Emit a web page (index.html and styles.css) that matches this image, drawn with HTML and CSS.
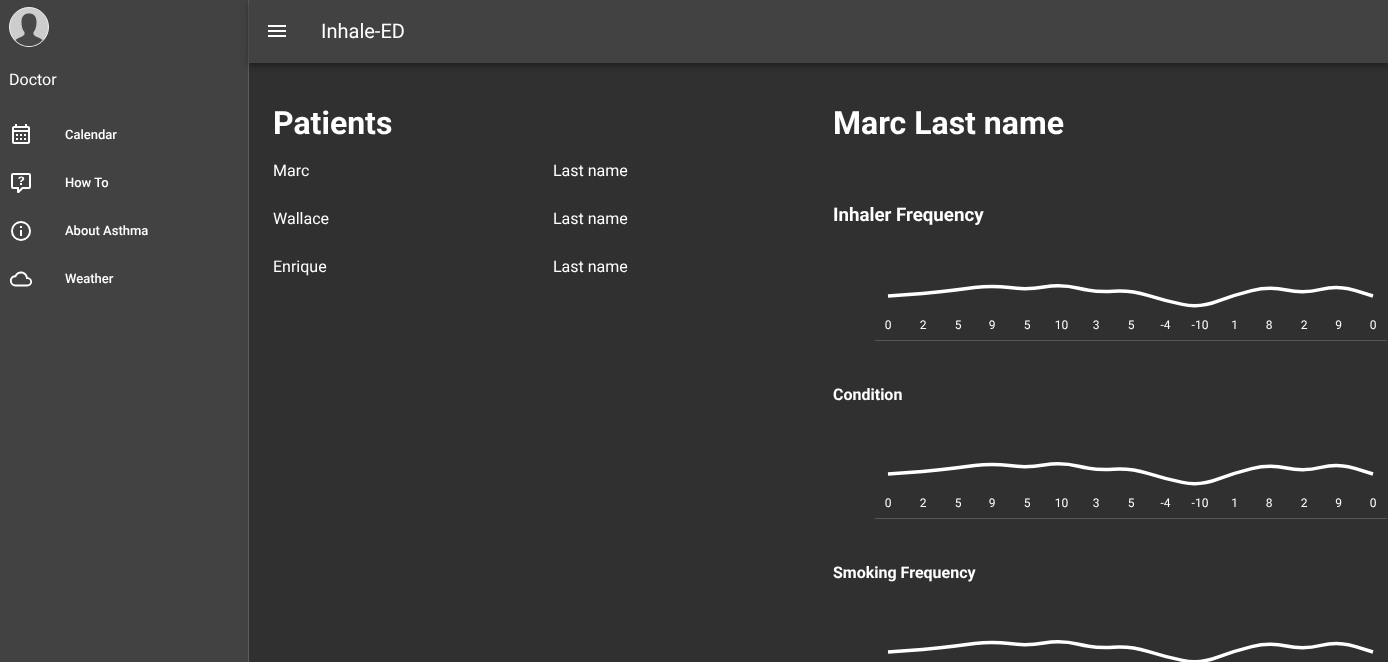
FILE: index.html
```html
<!DOCTYPE html>
<html>
<head>
    <title>Inhale-ED</title>
    <link rel="stylesheet" href="styles.css">
</head>
<body>
    <aside class="sidebar">
        <div class="avatar">
            <svg width="40" height="40" viewBox="0 0 40 40">
                <circle cx="20" cy="20" r="19.500" fill="#cdcdcd" stroke="#eeeeee" stroke-width="1"/>
                <path d="M6.500 33 C9 30.500 14 30 15.500 27.500 L15.500 25 C13.500 23 12.300 19 12.500 14 C12.800 9 15.500 6.500 20 6.500 C24.500 6.500 27.200 9 27.500 14 C27.700 19 26.500 23 24.500 25 L24.500 27.500 C26 30 31 30.500 33.500 33 C30 37.200 25 39 20 39 C15 39 10 37.200 6.500 33 Z" fill="#484848"/>
            </svg>
        </div>
        <div class="role">Doctor</div>
        <nav class="nav">
            <a class="nav-item">
                <svg class="nav-icon" width="24" height="24" viewBox="0 0 24 24"><path fill="#fff" d="M7 11H9V13H7V11M21 5V19C21 20.110 20.110 21 19 21H5C3.890 21 3 20.100 3 19V5C3 3.900 3.900 3 5 3H6V1H8V3H16V1H18V3H19C20.110 3 21 3.900 21 5M5 7H19V5H5V7M19 19V9H5V19H19M15 13V11H17V13H15M11 13V11H13V13H11M7 15H9V17H7V15M15 17V15H17V17H15M11 17V15H13V17H11Z"/></svg>
                <span>Calendar</span>
            </a>
            <a class="nav-item">
                <svg class="nav-icon" width="24" height="24" viewBox="0 0 24 24"><path fill="#fff" d="M4 2A2 2 0 0 0 2 4V16A2 2 0 0 0 4 18H8V21A1 1 0 0 0 9 22H9.500C9.750 22 10 21.900 10.200 21.710L13.900 18H20A2 2 0 0 0 22 16V4C22 2.890 21.100 2 20 2H4M4 4H20V16H13.080L10 19.080V16H4V4M12.190 5.500C11.300 5.500 10.590 5.680 10.050 6.040C9.500 6.400 9.220 7 9.270 7.690H11.240C11.240 7.410 11.340 7.200 11.500 7.060C11.700 6.920 11.920 6.850 12.190 6.850C12.500 6.850 12.770 6.930 12.950 7.110C13.130 7.280 13.220 7.500 13.220 7.800C13.220 8.080 13.140 8.330 13 8.540C12.830 8.760 12.620 8.940 12.360 9.080C11.840 9.400 11.500 9.680 11.290 9.920C11.100 10.160 11 10.500 11 11H13C13 10.720 13.050 10.500 13.140 10.320C13.230 10.150 13.400 10 13.660 9.850C14.120 9.640 14.500 9.360 14.790 9C15.080 8.630 15.230 8.240 15.230 7.800C15.230 7.100 14.950 6.540 14.400 6.120C13.850 5.710 13.110 5.500 12.190 5.500M11 12V14H13V12H11Z"/></svg>
                <span>How To</span>
            </a>
            <a class="nav-item">
                <svg class="nav-icon" width="24" height="24" viewBox="0 0 24 24"><path fill="#fff" d="M11 9H13V7H11M12 20C7.590 20 4 16.410 4 12C4 7.590 7.590 4 12 4C16.410 4 20 7.590 20 12C20 16.410 16.410 20 12 20M12 2A10 10 0 0 0 2 12A10 10 0 0 0 12 22A10 10 0 0 0 22 12A10 10 0 0 0 12 2M11 17H13V11H11V17Z"/></svg>
                <span>About Asthma</span>
            </a>
            <a class="nav-item">
                <svg class="nav-icon" width="24" height="24" viewBox="-1 -1 26 26"><path fill="#fff" d="M19 18H6A4 4 0 0 1 2 14A4 4 0 0 1 6 10H6.710C7.370 7.690 9.500 6 12 6A5.500 5.500 0 0 1 17.500 11.500V12H19A3 3 0 0 1 22 15A3 3 0 0 1 19 18M19.350 10.030C18.670 6.590 15.640 4 12 4C9.110 4 6.600 5.630 5.350 8.030C2.340 8.360 0 10.900 0 14A6 6 0 0 0 6 20H19C21.760 20 24 17.760 24 15C24 12.360 21.950 10.220 19.350 10.030Z"/></svg>
                <span>Weather</span>
            </a>
        </nav>
    </aside>

    <div class="page">
        <header class="topbar">
            <svg class="menu-icon" width="24" height="24" viewBox="0 0 24 24"><path fill="#fff" d="M3 18h18v-2H3v2zm0-5h18v-2H3v2zm0-7v2h18V6H3z"/></svg>
            <div class="app-title">Inhale-ED</div>
        </header>

        <main class="content">
            <section class="patients">
                <h1>Patients</h1>
                <div class="patient-row"><span>Marc</span><span>Last name</span></div>
                <div class="patient-row"><span>Wallace</span><span>Last name</span></div>
                <div class="patient-row"><span>Enrique</span><span>Last name</span></div>
            </section>

            <section class="details">
                <h1>Marc Last name</h1>

                <h2 class="first-chart">Inhaler Frequency</h2>
                <div class="chart">
                    <svg width="512" height="61" viewBox="0 0 512 61">
                        <path class="spark" d="M13 17 L30.320 15.800 Q47.640 14.600 64.960 12.800 Q82.290 11 99.610 8.600 Q116.930 6.200 134.250 8.600 Q151.570 11 168.890 8 Q186.210 5 203.540 9.200 Q220.860 13.400 238.180 12.200 Q255.500 11 272.820 16.400 Q290.140 21.800 307.460 25.400 Q324.790 29 342.110 22.400 Q359.430 15.800 376.750 11.600 Q394.070 7.400 411.390 11 Q428.710 14.600 446.040 10.400 Q463.360 6.200 480.680 11.600 L498 17"/>
                        <text x="13" y="50">0</text><text x="48" y="50">2</text><text x="83" y="50">5</text><text x="117" y="50">9</text><text x="152" y="50">5</text><text x="186.500" y="50">10</text><text x="221" y="50">3</text><text x="256" y="50">5</text><text x="290.500" y="50">-4</text><text x="325" y="50">-10</text><text x="359.500" y="50">1</text><text x="394" y="50">8</text><text x="429" y="50">2</text><text x="463.500" y="50">9</text><text x="498" y="50">0</text>
                    </svg>
                </div>

                <h2>Condition</h2>
                <div class="chart">
                    <svg width="512" height="61" viewBox="0 0 512 61">
                        <path class="spark" d="M13 17 L30.320 15.800 Q47.640 14.600 64.960 12.800 Q82.290 11 99.610 8.600 Q116.930 6.200 134.250 8.600 Q151.570 11 168.890 8 Q186.210 5 203.540 9.200 Q220.860 13.400 238.180 12.200 Q255.500 11 272.820 16.400 Q290.140 21.800 307.460 25.400 Q324.790 29 342.110 22.400 Q359.430 15.800 376.750 11.600 Q394.070 7.400 411.390 11 Q428.710 14.600 446.040 10.400 Q463.360 6.200 480.680 11.600 L498 17"/>
                        <text x="13" y="50">0</text><text x="48" y="50">2</text><text x="83" y="50">5</text><text x="117" y="50">9</text><text x="152" y="50">5</text><text x="186.500" y="50">10</text><text x="221" y="50">3</text><text x="256" y="50">5</text><text x="290.500" y="50">-4</text><text x="325" y="50">-10</text><text x="359.500" y="50">1</text><text x="394" y="50">8</text><text x="429" y="50">2</text><text x="463.500" y="50">9</text><text x="498" y="50">0</text>
                    </svg>
                </div>

                <h2>Smoking Frequency</h2>
                <div class="chart">
                    <svg width="512" height="61" viewBox="0 0 512 61">
                        <path class="spark" d="M13 17 L30.320 15.800 Q47.640 14.600 64.960 12.800 Q82.290 11 99.610 8.600 Q116.930 6.200 134.250 8.600 Q151.570 11 168.890 8 Q186.210 5 203.540 9.200 Q220.860 13.400 238.180 12.200 Q255.500 11 272.820 16.400 Q290.140 21.800 307.460 25.400 Q324.790 29 342.110 22.400 Q359.430 15.800 376.750 11.600 Q394.070 7.400 411.390 11 Q428.710 14.600 446.040 10.400 Q463.360 6.200 480.680 11.600 L498 17"/>
                    </svg>
                </div>
            </section>
        </main>
    </div>
</body>
</html>
```

FILE: styles.css
```css
html, body {
    height: 100%;
    margin: 0;
    overflow: hidden;
}
body {
    display: flex;
    background-color: #303030;
    color: #fff;
    font-family: Roboto, sans-serif;
    text-rendering: geometricPrecision;
}
/* own layers, so the text is antialiased in grey */
.role, .nav, .app-title, .patients, .details {
    will-change: transform;
}
.sidebar {
    box-sizing: border-box;
    width: 249px;
    flex-shrink: 0;
    height: 100%;
    background-color: #424242;
    border-right: 1px solid #5c5c5c;
}
.avatar {
    padding: 7px 0 0 9px;
    height: 40px;
}
.avatar svg {
    display: block;
}
.role {
    margin: 23px 0 0 9px;
    font-size: 16px;
    line-height: 20px;
}
.nav {
    margin-top: 21px;
}
.nav-item {
    display: flex;
    align-items: center;
    height: 48px;
    padding-left: 9px;
    font-size: 13px;
    font-weight: 500;
}
.nav-icon {
    margin-right: 32px;
}
.page {
    flex: 1;
    min-width: 0;
    height: 100%;
    display: flex;
    flex-direction: column;
}
.topbar {
    box-sizing: border-box;
    display: flex;
    align-items: center;
    height: 63px;
    flex-shrink: 0;
    padding: 0 0 1px 16px;
    background-color: #424242;
    box-shadow: 0 2px 4px -1px rgba(0, 0, 0, .2), 0 4px 5px 0 rgba(0, 0, 0, .14), 0 1px 10px 0 rgba(0, 0, 0, .12);
}
.app-title {
    margin-left: 32px;
    font-size: 20px;
    font-weight: 400;
}
.content {
    flex: 1;
    display: grid;
    grid-template-columns: 560px 1fr;
    padding: 40px 0 0 24px;
    overflow: hidden;
}
h1 {
    margin: 0;
    font-size: 32px;
    font-weight: 700;
    line-height: 40px;
}
.patients h1 {
    margin-bottom: 18px;
}
.patient-row {
    display: grid;
    grid-template-columns: 280px 280px;
    font-size: 16px;
    line-height: 20px;
    height: 48px;
    align-items: start;
}
h2 {
    margin: 0;
    font-size: 16px;
    font-weight: 700;
    line-height: 24px;
}
h2.first-chart {
    margin-top: 60px;
    font-size: 18.720px;
}
h2.first-chart + .chart {
    margin-top: 52px;
}
.chart {
    margin: 50px 0 42px 42px;
    width: 512px;
    border-bottom: 1px solid #575757;
}
.chart svg {
    display: block;
}
.chart text {
    fill: #fff;
    font-size: 12px;
    text-anchor: middle;
}
.spark {
    fill: none;
    stroke: #fff;
    stroke-width: 3.500;
    stroke-linecap: butt;
}
```
